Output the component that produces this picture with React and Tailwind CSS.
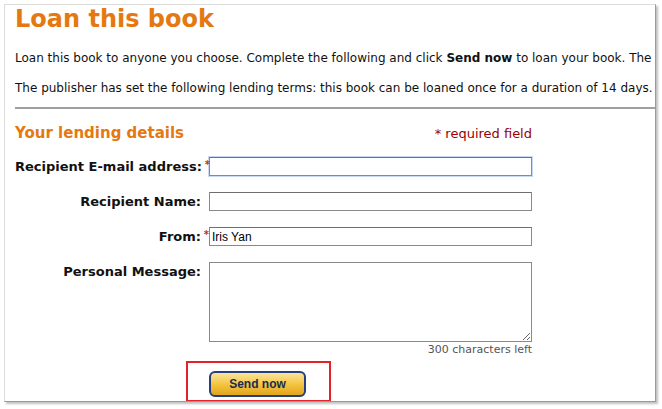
const labelCls = "text-[13px] font-bold text-[#111] text-right";
const inputCls = "w-[323px] h-[19px] border border-[#8a8a8a] border-t-[#6f6f6f] bg-white px-[2px] text-[12px] outline-none";

const Star = () => <span className="text-[#b13c1a] text-[10px] relative -top-[3px] w-[8px] inline-block">*</span>;

const App = () => {
  return (
    <div className="w-[662px] h-[409px] bg-white pt-[4px] pl-[4px]" style={{ fontFamily: "'DejaVu Sans', Verdana, sans-serif" }}>
      <div className="w-[652px] h-[398px] border border-[#dcdcdc] border-r-[#9a9a9a] border-b-[#9a9a9a] shadow-[2px_2px_2px_rgba(0,0,0,0.25)] overflow-hidden bg-white">
        <div className="pl-[10px] whitespace-nowrap">
          {/* Heading */}
          <h1 className="text-[24px] leading-[28px] font-bold text-[#e47911]">Loan this book</h1>

          <p className="text-[12px] leading-[15px] text-[#111] mt-[18px]">
            Loan this book to anyone you choose. Complete the following and click <b>Send now</b> to loan your book. The
          </p>
          <p className="text-[12px] leading-[15px] text-[#111] mt-[15px]">
            The publisher has set the following lending terms: this book can be loaned once for a duration of 14 days.
          </p>

          <div className="h-[2px] bg-[#a0a0a0] mt-[11px] -mr-[2px]"></div>

          {/* Lending details */}
          <div className="w-[517px] flex items-end justify-between mt-[15px]">
            <h2 className="text-[15px] leading-[18px] font-bold text-[#e47911]">Your lending details</h2>
            <span className="text-[13px] leading-[16px] text-[#990000]">* required field</span>
          </div>

          <div className="grid grid-cols-[194px_323px] mt-[15px] gap-y-[15px] items-center">
            <div className={labelCls}>Recipient E-mail address:<Star /></div>
            <input className={inputCls + " border-[#7c9bd8] shadow-[0_0_0_1px_#c9d8f3]"} defaultValue="" />

            <div className={labelCls}>Recipient Name:<span className="inline-block w-[8px]"></span></div>
            <input className={inputCls} defaultValue="" />

            <div className={labelCls + " mt-[1px]"}>From:<Star /></div>
            <input className={inputCls + " text-[#000] mt-[1px]"} style={{ fontFamily: "'Liberation Sans', Arial, sans-serif" }} defaultValue="Iris Yan" />

            <div className={labelCls + " self-start"}>Personal Message:<span className="inline-block w-[8px]"></span></div>
            <textarea className="w-[323px] h-[80px] border border-[#8a8a8a] bg-white text-[12px] outline-none block"></textarea>
          </div>

          <div className="w-[517px] text-right text-[11px] leading-[13px] text-[#555] mt-[1px]">300 characters left</div>

          {/* Send button */}
          <div className="ml-[171px] mt-[5px] w-[145px] h-[41px] border-2 border-[#e3232b] pt-[8px] pl-[21px]">
            <button className="w-[97px] h-[26px] rounded-[6px] border-2 border-[#23407a] bg-gradient-to-b from-[#fbe39a] via-[#f4c63f] to-[#e2a41b] text-[12px] font-bold text-[#1b2a4e]" style={{ fontFamily: "'Liberation Sans', Arial, sans-serif" }}>
              Send now
            </button>
          </div>
        </div>
      </div>
    </div>
  );
};

export default App;
